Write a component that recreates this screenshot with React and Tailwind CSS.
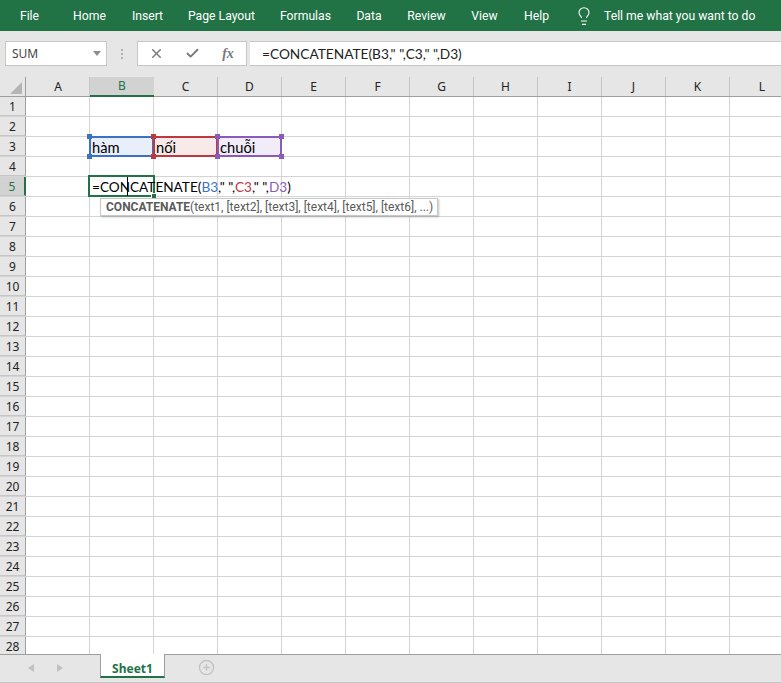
import { Check, CirclePlus, Lightbulb, X } from "lucide-react";

const tabs = [
  ["File", "w-[59px]"],
  ["Home", "w-[61px]"],
  ["Insert", "w-[55px]"],
  ["Page Layout", "w-[93px]"],
  ["Formulas", "w-[75px]"],
  ["Data", "w-[52px]"],
  ["Review", "w-[63px]"],
  ["View", "w-[53px]"],
  ["Help", "w-[51px]"],
];

const columns = ["B", "C", "D", "E", "F", "G", "H", "I", "J", "K"];
const rows = Array.from({ length: 28 }, (_, i) => i + 1);

const cellFills = { B: "bg-[#e9eff9]", C: "bg-[#f9eaea]", D: "bg-[#f1ecf8]" };
const cellTexts = { B: "hàm", C: "nối", D: "chuỗi" };

/* Coloured range around a cell referenced by the formula */
const RangeBox = ({ border, handle }) => (
  <div className={`absolute -left-px -top-px z-10 h-[21px] w-[65px] border-2 ${border}`}>
    <span className={`absolute -left-[4px] -top-[4px] size-[5px] ${handle}`} />
    <span className={`absolute -right-[4px] -top-[4px] size-[5px] ${handle}`} />
    <span className={`absolute -bottom-[4px] -left-[4px] size-[5px] ${handle}`} />
    <span className={`absolute -bottom-[4px] -right-[4px] size-[5px] ${handle}`} />
  </div>
);

const ranges = {
  B: ["border-[#3b73c4]", "bg-[#3b73c4]"],
  C: ["border-[#c0383f]", "bg-[#c0383f]"],
  D: ["border-[#8a5cba]", "bg-[#8a5cba]"],
};

const FormulaCell = () => (
  <>
    <div className="absolute -left-[2px] -top-[2px] z-10 h-[22px] w-[67px] border-2 border-[#217346]">
      <span className="absolute -bottom-[4px] -right-[4px] size-[6px] border border-white bg-[#217346]" />
    </div>
    <div className="absolute left-[2px] top-0 z-20 flex h-[20px] items-center whitespace-nowrap text-[13.6px] text-black">
      =CONCATENATE(
      <span className="text-[#3b73c4]">B3</span>," ",
      <span className="text-[#c0383f]">C3</span>," ",
      <span className="text-[#8a5cba]">D3</span>)
    </div>
    {/* Text caret */}
    <span className="absolute left-[37px] top-0 z-20 h-[19px] w-px bg-black" />
    <div className="absolute left-[10px] top-[21px] z-20 flex h-[18px] w-[338px] items-center whitespace-nowrap border border-[#c8c8c8] bg-white pl-[5px] font-['Roboto',sans-serif] text-[12px] text-[#5a5a5a] shadow-[1px_1px_2px_rgba(0,0,0,0.25)]">
      <span className="font-bold">CONCATENATE</span>
      (text1, [text2], [text3], [text4], [text5], [text6], ...)
    </div>
  </>
);

export default function App() {
  return (
    <div className="flex h-[683px] w-[781px] flex-col overflow-hidden bg-white font-['Noto_Sans',sans-serif] text-[12px]">
      {/* Ribbon tabs */}
      <div className="flex h-[31px] shrink-0 items-center bg-[#217346] pt-px font-['Roboto',sans-serif] text-[12.2px] text-white">
        {tabs.map(([name, width]) => (
          <div key={name} className={`${width} text-center`}>
            {name}
          </div>
        ))}
        <Lightbulb className="ml-[12px] size-[20px]" strokeWidth={1.3} />
        <span className="ml-[10px]">Tell me what you want to do</span>
      </div>

      {/* Formula bar */}
      <div className="flex h-[46px] shrink-0 items-start bg-[#e6e6e6] pl-[5px] pt-[10px]">
        <div className="flex h-[25px] w-[102px] items-center justify-between border border-[#c6c6c6] bg-white pl-[6px] pr-[5px] text-[#444]">
          <span className="pt-px">SUM</span>
          <svg width="8" height="5" viewBox="0 0 8 5">
            <path d="M0 0h8L4 5z" fill="#8c8c8c" />
          </svg>
        </div>
        <div className="flex h-[25px] w-[30px] flex-col items-center justify-center gap-[2px]">
          <span className="size-[2px] bg-[#b0b0b0]" />
          <span className="size-[2px] bg-[#b0b0b0]" />
          <span className="size-[2px] bg-[#b0b0b0]" />
        </div>
        <div className="flex h-[25px] w-[110px] items-center border border-[#c6c6c6] bg-white text-[#7a7a7a]">
          <div className="flex w-[36px] justify-center">
            <X className="size-[15px]" strokeWidth={2.4} />
          </div>
          <div className="flex w-[36px] justify-center">
            <Check className="size-[15px]" strokeWidth={3} />
          </div>
          <div className="w-[36px] text-center font-['Liberation_Serif',serif] text-[14px] font-bold italic">
            fx
          </div>
        </div>
        <div className="ml-[3px] flex h-[25px] flex-1 items-center border-y border-[#c6c6c6] bg-white pl-[12px] pt-px font-['Lato',sans-serif] text-[13.7px] text-[#222]">
          =CONCATENATE(B3," ",C3," ",D3)
        </div>
      </div>

      {/* Column headers */}
      <div className="flex h-[20px] shrink-0 border-b border-[#9e9e9e] bg-[#e6e6e6] text-[#222]">
        <div className="flex w-[26px] shrink-0 items-end justify-end border-r border-[#9e9e9e] pb-[2px] pr-[3px]">
          <svg width="12" height="12" viewBox="0 0 12 12">
            <path d="M12 0v12H0z" fill="#b4b4b4" />
          </svg>
        </div>
        <div className="flex w-[64px] shrink-0 items-center justify-center border-r border-[#c6c6c6] pl-px">A</div>
        {columns.map((col) => (
          <div
            key={col}
            className={
              col === "B"
                ? "-mb-px flex w-[64px] shrink-0 items-center justify-center border-b-2 border-[#217346] bg-[#d2d2d2] text-[#217346]"
                : "flex w-[64px] shrink-0 items-center justify-center border-r border-[#c6c6c6]"
            }
          >
            {col}
          </div>
        ))}
        <div className="w-[64px] shrink-0 text-center leading-[19px]">L</div>
      </div>

      {/* Sheet grid */}
      <div className="min-h-0 flex-1 overflow-hidden">
        {rows.map((row) => (
          <div key={row} className="flex h-[20px] border-b border-[#d4d4d4]">
            <div
              className={
                row === 5
                  ? "flex w-[26px] shrink-0 items-center justify-center border-b border-r-2 border-b-[#c6c6c6] border-r-[#217346] bg-[#d2d2d2] pt-[2px] text-[#217346]"
                  : "flex w-[26px] shrink-0 items-center justify-center border-b border-r border-b-[#c6c6c6] border-r-[#9e9e9e] bg-[#e6e6e6] pt-[2px] text-[#222]"
              }
            >
              {row}
            </div>
            <div className="w-[64px] shrink-0 border-r border-[#d4d4d4]" />
            {columns.map((col) => (
              <div
                key={col}
                className={`relative w-[64px] shrink-0 border-r border-[#d4d4d4] ${row === 3 && cellFills[col] ? cellFills[col] : ""}`}
              >
                {row === 3 && cellTexts[col] && (
                  <>
                    <RangeBox border={ranges[col][0]} handle={ranges[col][1]} />
                    <span className="absolute left-[2px] top-px z-20 font-['Lato',sans-serif] text-[14.7px] leading-[19px] text-black">
                      {cellTexts[col]}
                    </span>
                  </>
                )}
                {row === 5 && col === "B" && (
                  <div className="font-['Lato',sans-serif]">
                    <FormulaCell />
                  </div>
                )}
              </div>
            ))}
            <div className="flex-1" />
          </div>
        ))}
      </div>

      {/* Sheet tabs */}
      <div className="flex h-[29px] shrink-0 border-y border-t-[#9e9e9e] border-b-[#c6c6c6] bg-[#e6e6e6]">
        <div className="flex w-[100px] items-start gap-[23px] pl-[28px] pt-[9px]">
          <svg width="6" height="8" viewBox="0 0 6 8">
            <path d="M6 0v8L0 4z" fill="#c0c0c0" />
          </svg>
          <svg width="6" height="8" viewBox="0 0 6 8">
            <path d="M0 0v8l6-4z" fill="#c0c0c0" />
          </svg>
        </div>
        <div className="-mt-px h-[24px] w-[65px] border-x border-b-2 border-x-[#9e9e9e] border-b-[#217346] bg-white pt-[6px] text-center font-bold text-[#217346]">
          Sheet1
        </div>
        <div className="pl-[33px] pt-[4px]">
          <CirclePlus className="size-[17px] text-[#c4c4c4]" strokeWidth={2} />
        </div>
      </div>
    </div>
  );
}
